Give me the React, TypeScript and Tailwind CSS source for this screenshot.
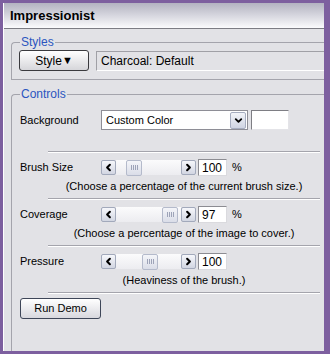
import { ChevronDown, ChevronLeft, ChevronRight } from "lucide-react";

const sliders = [
  { label: "Brush Size", value: "100", unit: "%", thumb: 10, hint: "(Choose a percentage of the current brush size.)" },
  { label: "Coverage", value: "97", unit: "%", thumb: 46, hint: "(Choose a percentage of the image to cover.)" },
  { label: "Pressure", value: "100", unit: "", thumb: 26, hint: "(Heaviness of the brush.)" },
];

const Separator = () => (
  <div className="ml-[36px] mr-[4px] h-[2px] border-t border-b border-t-[#a4a4ac] border-b-white" />
);

const ArrowButton = ({ dir }: { dir: "left" | "right" }) => (
  <div className="flex h-[15px] w-[15px] items-center justify-center rounded-[2px] border border-[#a2a9bb] bg-gradient-to-b from-[#f6f7fb] to-[#d2d6e2]">
    {dir === "left" ? (
      <ChevronLeft size={11} strokeWidth={4.5} color="#000" />
    ) : (
      <ChevronRight size={11} strokeWidth={4.5} color="#000" />
    )}
  </div>
);

const Slider = ({ thumb }: { thumb: number }) => (
  <div className="flex items-center">
    <ArrowButton dir="left" />
    <div className="flex h-[15px] w-[65px] items-center bg-gradient-to-b from-[#fbfbfc] to-[#ececf0]">
      <div
        className="flex h-[16px] w-[16px] items-center justify-center gap-[1px] rounded-[2px] border border-[#b4bacb] bg-gradient-to-b from-[#f4f5f9] to-[#dadde8]"
        style={{ marginLeft: thumb }}
      >
        <div className="h-[5px] w-px bg-[#9da3b8]" />
        <div className="h-[5px] w-px bg-[#9da3b8]" />
        <div className="h-[5px] w-px bg-[#9da3b8]" />
        <div className="h-[5px] w-px bg-[#9da3b8]" />
      </div>
    </div>
    <ArrowButton dir="right" />
  </div>
);

export default function App() {
  return (
    <div className="h-[354px] w-[330px] bg-[#7d5f9f] pb-[3px] pl-[3px] pr-[6px] pt-[3px] font-['Liberation_Sans',Arial,sans-serif] text-[11px] text-black">
      <div className="flex h-full flex-col overflow-hidden border-l border-white bg-[#e2e2e6]">
        {/* title bar */}
        <div className="flex h-[26px] shrink-0 items-center border-b border-[#7c7c84] bg-gradient-to-b from-[#b3b3c1] to-[#fbfbfd] pl-[6px]">
          <span className="text-[13px] font-bold">Impressionist</span>
        </div>

        {/* Styles */}
        <div className="relative ml-[7px] mt-[13px] shrink-0 rounded-tl-[4px] border-l border-t border-b border-[#a4a4ac] pb-[8px] pl-[7px] pt-[7px]">
          <span className="absolute -top-[8px] left-[8px] bg-[#e2e2e6] px-[1px] leading-[14px] text-[12px] text-[#2b55c0]">Styles</span>
          <div className="flex items-center">
            <div className="flex h-[21px] w-[70px] items-center justify-center rounded-[3px] border border-[#3a3a3e] bg-gradient-to-b from-white to-[#d6d6da] text-[12px]">
              <span>Style</span>
              <span className="text-[11px] leading-none">▼</span>
            </div>
            <div className="ml-[7px] flex h-[20px] flex-1 items-center border-l border-t border-b border-l-[#a0a0a6] border-t-[#a0a0a6] border-b-white pl-[4px] text-[12px]">
              Charcoal: Default
            </div>
          </div>
        </div>

        {/* Controls */}
        <div className="relative ml-[7px] mt-[14px] flex-1 rounded-tl-[4px] border-l border-t border-[#a4a4ac] pt-[15px]">
          <span className="absolute -top-[8px] left-[8px] bg-[#e2e2e6] px-[1px] leading-[14px] text-[12px] text-[#2b55c0]">Controls</span>

          <div className="flex h-[20px] items-center pl-[8px]">
            <span className="w-[81px]">Background</span>
            <div className="flex h-[20px] w-[147px] items-center border border-[#8e8e96] bg-white pl-[4px]">
              <span className="flex-1">Custom Color</span>
              <div className="mr-px flex h-[17px] w-[16px] items-center justify-center rounded-[2px] border border-[#a6adc0] bg-gradient-to-b from-[#f2f4f9] to-[#cfd4e2]">
                <ChevronDown size={11} strokeWidth={4} color="#000" />
              </div>
            </div>
            <div className="ml-[3px] h-[20px] w-[38px] border border-l-[#7e7e84] border-t-[#7e7e84] border-r-[#e4e4e8] border-b-[#e4e4e8] bg-white" />
          </div>

          <div className="mt-[21px]">
            <Separator />
          </div>

          {sliders.map((s) => (
            <div key={s.label}>
              <div className="mt-[6px] flex h-[17px] items-center pl-[8px]">
                <span className="w-[81px]">{s.label}</span>
                <Slider thumb={s.thumb} />
                <div className="ml-[2px] flex h-[17px] w-[29px] items-center border border-l-[#8c8c92] border-t-[#8c8c92] border-r-[#dadade] border-b-[#dadade] bg-white pl-[3px] text-[12px]">
                  {s.value}
                </div>
                <span className="ml-[5px]">{s.unit}</span>
              </div>
              <div className="ml-[36px] mr-[4px] mt-[4px] h-[12px] text-center leading-[12px]">{s.hint}</div>
              <div className="mt-[6px]">
                <Separator />
              </div>
            </div>
          ))}

          <div className="mt-[4px] pl-[8px]">
            <div className="flex h-[21px] w-[81px] items-center justify-center rounded-[3px] border border-[#3e4658] bg-gradient-to-b from-white to-[#d8d8de]">
              Run Demo
            </div>
          </div>
        </div>
      </div>
    </div>
  );
}
